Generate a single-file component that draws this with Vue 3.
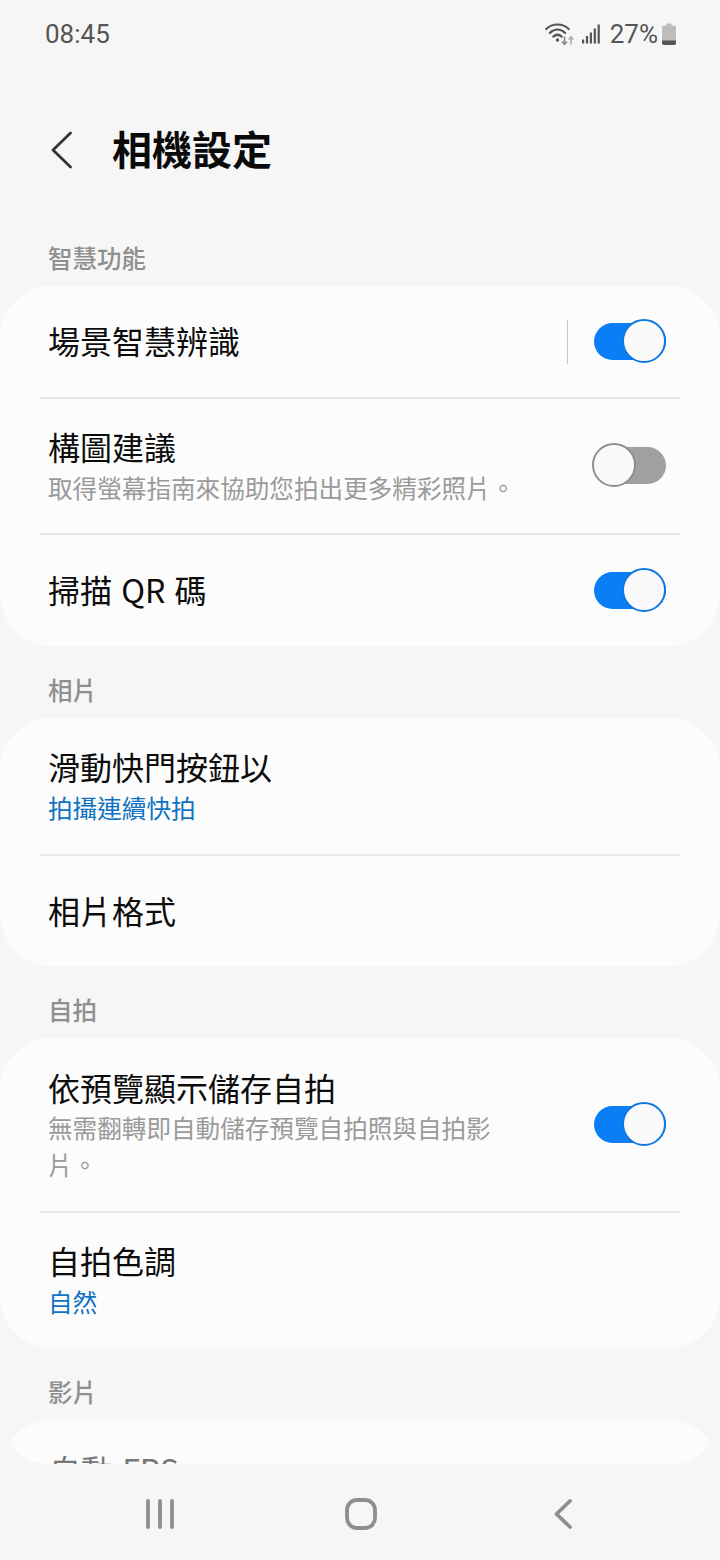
<script setup>
const sections = [
  { label: '智慧功能', rows: [
    { title: '場景智慧辨識', toggle: true, on: true, sep: true, h: 113 },
    { title: '構圖建議', sub: '取得螢幕指南來協助您拍出更多精彩照片。', oneLine: true, toggle: true, on: false, h: 136 },
    { title: '掃描 QR 碼', toggle: true, on: true, h: 111 },
  ]},
  { label: '相片', rows: [
    { title: '滑動快門按鈕以', link: '拍攝連續快拍', h: 138 },
    { title: '相片格式', h: 110 },
  ]},
  { label: '自拍', rows: [
    { title: '依預覽顯示儲存自拍', sub: '無需翻轉即自動儲存預覽自拍照與自拍影片。', toggle: true, on: true, h: 175 },
    { title: '自拍色調', link: '自然', h: 135 },
  ]},
]
</script>

<template>
  <div class="screen">
    <div class="status">
      <span class="time">08:45</span>
      <div class="status-right">
        <svg width="30" height="24" viewBox="0 0 30 24" class="wifi">
          <path d="M1.200 7C7.500 1 17.500 1 23.800 7" fill="none" stroke="#555" stroke-width="2.200" stroke-linecap="round"/>
          <path d="M4.800 11C9.500 6.600 15.500 6.600 20.200 11" fill="none" stroke="#555" stroke-width="2.200" stroke-linecap="round"/>
          <path d="M8.300 14.600C11 12.200 14 12.200 16.700 14.600" fill="none" stroke="#555" stroke-width="2.200" stroke-linecap="round"/>
          <circle cx="12.500" cy="18" r="1.700" fill="#555"/>
          <path d="M19.500 14.500v7.500M17 19.500l2.500 2.800 2.500-2.800" fill="none" stroke="#8a8a8a" stroke-width="1.700"/>
          <path d="M26 22.500v-7.500M23.700 17.500l2.300-2.700 2.300 2.700" fill="none" stroke="#b0b0b0" stroke-width="1.700"/>
        </svg>
        <svg width="18" height="20" viewBox="0 0 18 20" class="signal">
          <rect x="0" y="15.500" width="2.200" height="4" fill="#555"/>
          <rect x="3.900" y="12" width="2.200" height="7.500" fill="#555"/>
          <rect x="7.800" y="8.500" width="2.200" height="11" fill="#555"/>
          <rect x="11.700" y="4.500" width="2.200" height="15" fill="#555"/>
          <rect x="15.600" y="0.500" width="2.200" height="19" fill="#555"/>
        </svg>
        <span class="pct">27%</span>
        <svg width="14" height="22" viewBox="0 0 14 22" class="batt">
          <path d="M4.500 0.500h5v2h2.500a2 2 0 0 1 2 2V20a2 2 0 0 1-2 2H2a2 2 0 0 1-2-2V4.500a2 2 0 0 1 2-2h2.500z" fill="#bdbdbd"/>
          <path d="M0 17.500h14V20a2 2 0 0 1-2 2H2a2 2 0 0 1-2-2z" fill="#555"/>
        </svg>
      </div>
    </div>

    <div class="content">
      <header class="head">
        <svg class="back" width="24" height="40" viewBox="0 0 24 40">
          <path d="M20.500 3L3 20l17.500 17" fill="none" stroke="#333" stroke-width="2.800" stroke-linecap="round" stroke-linejoin="round"/>
        </svg>
        <h1>相機設定</h1>
      </header>

      <section v-for="s in sections" :key="s.label" class="section">
        <div class="label">{{ s.label }}</div>
        <div class="card">
          <div v-for="r in s.rows" :key="r.title" class="row" :style="{ height: r.h + 'px' }">
            <div class="text">
              <div class="title">{{ r.title }}</div>
              <div v-if="r.sub" class="sub" :class="{ one: r.oneLine }">{{ r.sub }}</div>
              <div v-if="r.link" class="link">{{ r.link }}</div>
            </div>
            <span v-if="r.sep" class="vsep"></span>
            <span v-if="r.toggle" class="toggle" :class="{ on: r.on }"><i></i></span>
          </div>
        </div>
      </section>

      <div class="label last">影片</div>
      <div class="peek"><div class="title">自動 FPS</div></div>
    </div>

    <nav class="nav">
      <svg class="n1" width="28" height="30" viewBox="0 0 28 30"><path d="M2 2v26M14 2v26M26 2v26" stroke="#8e8e8e" stroke-width="3.800" stroke-linecap="round"/></svg>
      <svg class="n2" width="32" height="32" viewBox="0 0 32 32"><rect x="2" y="2" width="28" height="28" rx="10" fill="none" stroke="#8e8e8e" stroke-width="3.800"/></svg>
      <svg class="n3" width="18" height="30" viewBox="0 0 18 30"><path d="M16 2L2.500 15 16 28" fill="none" stroke="#8e8e8e" stroke-width="3.800" stroke-linecap="round" stroke-linejoin="round"/></svg>
    </nav>
  </div>
</template>

<style>
html, body { margin: 0; background: #f6f6f6; }
</style>

<style scoped>
.screen {
  width: 720px; height: 1560px; background: #f6f6f6; overflow: hidden;
  display: flex; flex-direction: column;
  font-family: "Noto Sans CJK TC", "Noto Sans", sans-serif;
}
.status {
  height: 68px; flex: none; box-sizing: border-box; padding: 0 44px 0 45px;
  display: flex; justify-content: space-between; align-items: center;
  color: #555; font-family: Roboto, sans-serif; font-size: 26px;
}
.status-right { display: flex; align-items: center; }
.signal { margin-left: 7px; }
.pct { margin-left: 10px; }
.batt { margin-left: 4px; }
.content { height: 1396px; flex: none; overflow: hidden; }
.head { height: 165px; display: flex; align-items: flex-start; padding: 62px 0 0 50px; box-sizing: border-box; }
.back { margin-right: 38px; }
h1 { margin: -2px 0 0; font-size: 40px; line-height: 40px; font-weight: 700; color: #0a0a0a; }
.label { height: 53px; box-sizing: border-box; padding: 11px 0 0 48px; font-size: 24.500px; line-height: 28px; font-weight: 500; color: #8f8f8f; }
.section + .section .label { height: 72px; padding-top: 30px; }
.card { background: #fcfcfc; border-radius: 52px; overflow: hidden; }
.row {
  display: flex; align-items: center; box-sizing: border-box;
  margin: 0 40px; padding: 0 14px 0 8px; border-bottom: 2px solid #e8e8e8;
}
.row:last-child { border-bottom: none; }
.text { flex: 1; min-width: 0; margin-bottom: 3px; }
.title { font-size: 32px; line-height: 42px; color: #0c0c0c; word-spacing: 2px; }
.sub { width: 470px; margin: 1px 0 -2px; font-size: 24.600px; line-height: 37px; color: #9a9a9a; }
.sub.one { margin: 2px 0 -1px; }
.link { margin: 1px 0 -1px; font-size: 24.600px; line-height: 38px; color: #0f73c4; }
.vsep { width: 1.500px; height: 44px; background: #c8c8c8; margin-right: 26px; }
.toggle {
  position: relative; width: 72px; height: 37px; border-radius: 19px; background: #a0a0a0; flex: none;
  margin-bottom: 2px;
}
.toggle i {
  position: absolute; top: -4px; left: -2px; width: 44px; height: 44px; box-sizing: border-box;
  border-radius: 50%; background: #fafafa; border: 2px solid #8e8e8e;
}
.toggle.on { background: #0a7ff5; margin-bottom: 0; }
.toggle.on i { left: auto; right: 0; border-color: #0f78e0; }
.last { height: 72px; padding-top: 30px; }
.peek {
  height: 45px; background: #fcfcfc; overflow: hidden; box-sizing: border-box; padding: 28px 0 0 49px;
  clip-path: path("M52 0H668A52 52 0 0 1 711 22.500A52 52 0 0 1 668 45H52A52 52 0 0 1 9 22.500A52 52 0 0 1 52 0Z");
}
.peek .title { color: #777; }
.nav { flex: 1; display: flex; align-items: flex-start; padding-top: 35px; }
.n1 { margin-left: 146px; }
.n2 { margin-left: 171px; margin-top: -1px; }
.n3 { margin-left: 177px; }
</style>
